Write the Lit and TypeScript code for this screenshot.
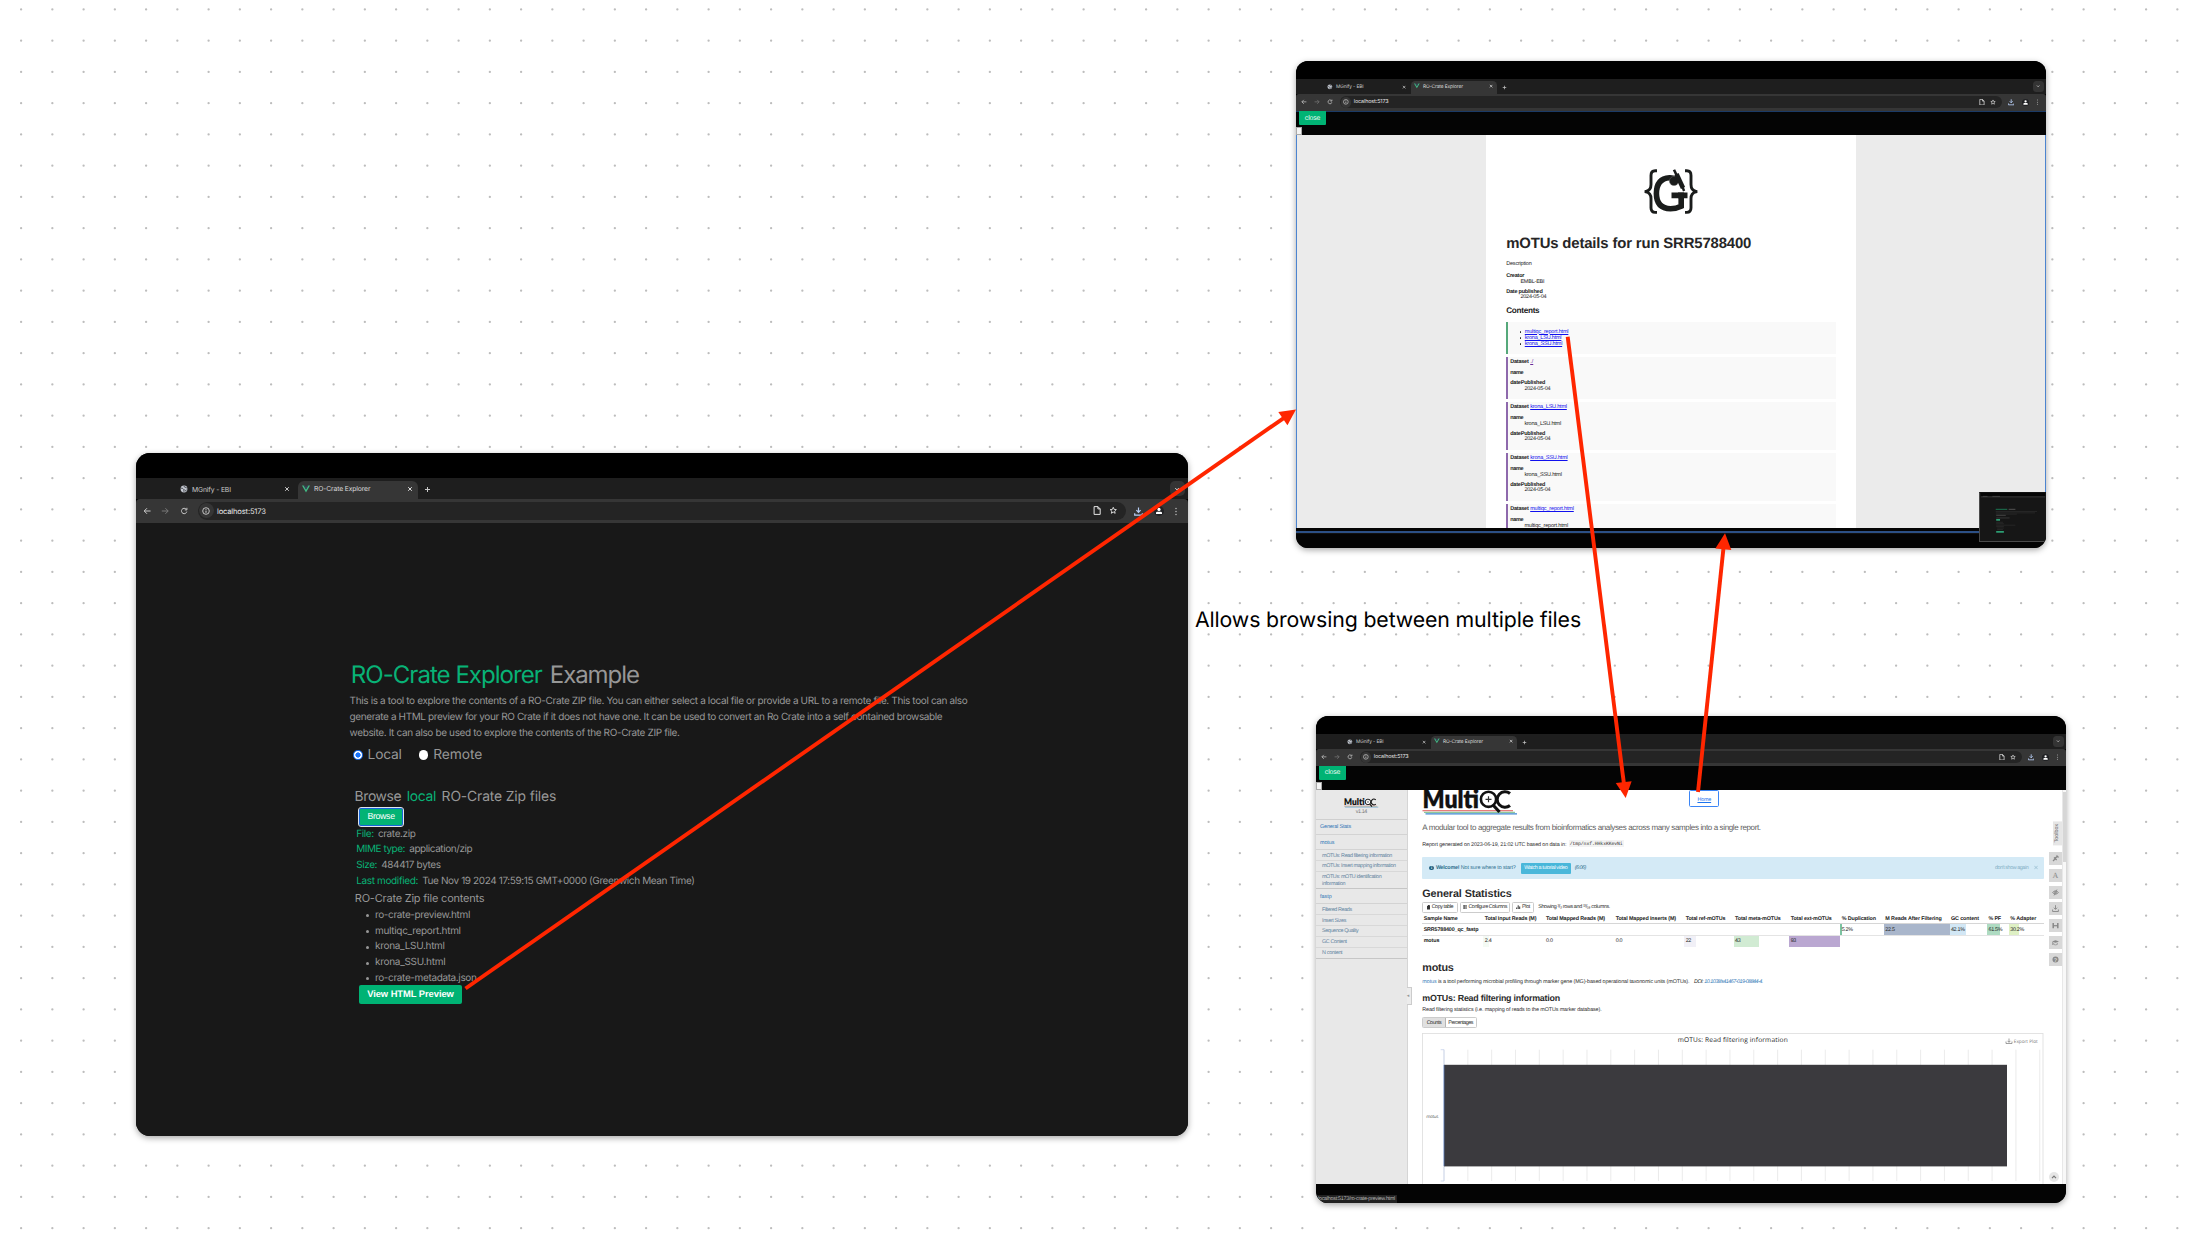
import { LitElement, html, svg, css, nothing } from "lit";
import { customElement, property } from "lit/decorators.js";

/** Text whose tracking is adjusted so that it fits a given width. */
@customElement("fit-text")
class FitText extends LitElement {
  static styles = css`
    :host { display: inline-block; white-space: pre; flex: none; }
  `;
  @property({ type: Number }) w = 0;
  render() { return html`<slot></slot>`; }
  updated() {
    const n = (this.textContent || "").length;
    if (!this.w || !n) return;
    this.style.letterSpacing = "0px";
    const natural = this.getBoundingClientRect().width;
    this.style.letterSpacing = ((this.w - natural) / n).toFixed(4) + "px";
  }
}

const fit = (text: string, w: number, cls = "") => html`<fit-text class=${cls} .w=${w}>${text}</fit-text>`;

/** A desktop window: menu bar strip, tab strip, address bar and a slotted page. */
@customElement("browser-window")
class BrowserWindow extends LitElement {
  static styles = css`
    :host { display: flex; flex-direction: column; overflow: hidden; background: #000; font-family: Inter, "Liberation Sans", sans-serif; }
    .chrome { flex: none; color: #c9c9c9; }
    .small { zoom: 0.713; }
    .menu { height: 25px; background: #000; }
    .tabs { height: 21px; background: #1e1e1e; display: flex; align-items: flex-end; padding: 0 3.5px 0 44px; }
    .tab { box-sizing: border-box; height: 18px; display: flex; align-items: center; font-size: 6.8px; padding-bottom: 2px; }
    .idle { width: 118px; padding-right: 8px; }
    .live { width: 120px; background: #363636; border-radius: 6px 6px 0 0; padding: 0 5px 3px 4px; color: #dcdcdc; }
    .name { flex: 1; white-space: nowrap; padding-left: 4px; }
    .idle .name { letter-spacing: -0.14px; }
    .live .name { letter-spacing: -0.14px; padding-top: 0.8px; }
    .plus { margin: 0 0 6px 6.4px; }
    .search { margin: 0 0 3px auto; width: 14.5px; height: 15px; border-radius: 5px; background: #343434; display: flex; align-items: center; justify-content: center; }
    .bar { height: 24px; background: #363636; border-radius: 4px 4px 0 0; display: flex; align-items: center; padding: 0 7px 0 6.6px; box-sizing: border-box; }
    .nav { flex: none; display: flex; gap: 9.9px; width: 55.2px; padding-left: 0.6px; box-sizing: border-box; }
    .addr { flex: none; width: 928px; height: 17.4px; border-radius: 9px; background: #242424; display: flex; align-items: center; font-size: 7.6px; color: #e4e4e4; box-sizing: border-box; padding: 0 8px 0 1px; margin-bottom: 0.4px; }
    .info { width: 15px; height: 15px; border-radius: 50%; background: #353535; display: flex; align-items: center; justify-content: center; margin-right: 3.2px; }
    .url { flex: 1; letter-spacing: -0.17px; padding-top: 0.6px; }
    .acts { display: flex; gap: 7.5px; }
    .right { flex: none; display: flex; align-items: center; justify-content: space-between; width: 44px; margin-left: 8.5px; }
    svg { display: block; flex: none; fill: none; stroke: currentColor; stroke-width: 1; }
    .off { color: #787878; }
    .dl { color: #b6cdf5; stroke-width: 1.2; }
    .page { flex: 1; min-height: 0; display: flex; flex-direction: column; }
    ::slotted(*) { flex: 1; min-height: 0; }
  `;
  @property({ type: Boolean }) small = false;
  render() {
    const x = svg`<path d="M1.2 1.2L4.8 4.8M4.8 1.2L1.2 4.8"/>`;
    return html`
      <div class="chrome ${this.small ? "small" : ""}">
        <div class="menu"></div>
        <div class="tabs">
          <div class="tab idle">
            <svg width="8" height="8" viewBox="0 0 8 8"><circle cx="4" cy="4" r="3.4" fill="#c3c7cf" stroke="none"/><path d="M1 3.2q1.5-.2 2 .6t1.2.7l-.6 2M4 .9q0 1.2 1 1.3t1.8.8M4.9 6.6q.4-1.5 1.7-1.6" stroke="#3a3d44" stroke-width=".9"/></svg>
            <span class="name">MGnify - EBI</span>
            <svg width="6" height="6">${x}</svg>
          </div>
          <div class="tab live">
            <svg width="8" height="8" viewBox="0 0 8 8"><path d="M0 .6h1.7L4 4.6 6.3.6H8L4 7.5z" fill="#41b883" stroke="none"/><path d="M1.7.6h1.4L4 2.2 4.9.6h1.4L4 4.6z" fill="#35495e" stroke="none"/></svg>
            <span class="name">RO-Crate Explorer</span>
            <svg width="6" height="6">${x}</svg>
          </div>
          <svg class="plus" width="7" height="7"><path d="M3.5 1v5M1 3.5h5"/></svg>
          <div class="search"><svg width="6" height="6"><path d="M1.2 2l1.8 2 1.8-2"/></svg></div>
        </div>
        <div class="bar">
          <div class="nav">
            <svg width="8.4" height="8" viewBox="0 0 8.4 8"><path d="M7.6 4H1.2M4 1.2L1.2 4 4 6.8"/></svg>
            <svg class="off" width="8.4" height="8" viewBox="0 0 8.4 8"><path d="M.8 4h6.4M4.4 1.2L7.2 4 4.4 6.8"/></svg>
            <svg width="8.4" height="8" viewBox="0 0 8.4 8"><path d="M6.8 4.6A2.7 2.7 0 1 1 6.2 2.2M6.9.8v2.1H4.8"/></svg>
          </div>
          <div class="addr">
            <div class="info"><svg width="8" height="8" viewBox="0 0 8 8"><circle cx="4" cy="4" r="3.3" stroke-width=".8"/><path d="M4 3.6v2.2M4 2.1v.8" stroke-width=".9"/></svg></div>
            <span class="url">localhost:5173</span>
            <div class="acts">
              <svg width="8.5" height="9" viewBox="0 0 8.5 9"><path d="M1.1.6h3.8l2.3 2.3v5.5H1.1zM4.9.6v2.3h2.3"/></svg>
              <svg width="8.5" height="9" viewBox="0 0 8.5 9"><path d="M4.25 1.3l.9 2.1 2.2.2-1.7 1.5.5 2.2-1.9-1.2-1.9 1.2.5-2.2-1.7-1.5 2.2-.2z" stroke-width=".9"/></svg>
            </div>
          </div>
          <div class="right">
            <svg class="dl" width="9" height="9" viewBox="0 0 9 9"><path d="M4.5.4v4.8M2.4 3.2l2.1 2.2 2.1-2.2M.7 6.2v2h7.6v-2"/></svg>
            <svg width="10" height="10" viewBox="0 0 10 10"><circle cx="5" cy="5" r="5" fill="#202124" stroke="none"/><circle cx="5" cy="3.4" r="1.6" fill="#fff" stroke="none"/><path d="M2 8V6.6q0-.9 1.2-.9h3.6q1.2 0 1.2.9V8z" fill="#fff" stroke="none"/></svg>
            <svg width="4" height="9" viewBox="0 0 4 9"><g fill="currentColor" stroke="none"><circle cx="2" cy="1.5" r=".7"/><circle cx="2" cy="4.5" r=".7"/><circle cx="2" cy="7.5" r=".7"/></g></svg>
          </div>
        </div>
      </div>
      <div class="page"><slot></slot></div>`;
  }
}

@customElement("explorer-page")
class ExplorerPage extends LitElement {
  static styles = css`
    :host { display: block; background: #181818; color: #979797; font: 10px/16px Inter, "Liberation Sans", sans-serif; padding: 136.2px 0 0 214px; white-space: nowrap; }
    fit-text { vertical-align: top; }
    .g { color: #08b276; }
    h1 { margin: 0 0 0 0.8px; font-weight: 400; font-size: 24px; line-height: 32px; height: 32px; display: flex; gap: 8px; }
    .intro { margin-top: 2.2px; margin-left: -0.4px; display: flex; flex-direction: column; }
    .radios { display: flex; align-items: center; margin: 5.6px 0 0 3px; height: 16px; font-size: 13.8px; font-weight: 400; }
    .dot { width: 9.6px; height: 9.6px; border-radius: 50%; background: #fff; margin-right: 5px; box-sizing: border-box; }
    .on { border: 1.2px solid #1673ff; background: radial-gradient(circle, #1673ff 2.3px, #fff 2.9px); }
    .second { margin-left: 17px; }
    h2 { margin: 24.4px 0 0 4.6px; height: 20px; font: 400 13.9px/20px Inter, "Liberation Sans", sans-serif; display: flex; gap: 5.5px; }
    .browse { margin: 0.6px 0 0 9.3px; width: 43.6px; height: 17.6px; box-sizing: border-box; border: 1px solid #1765d8; outline: 0.8px solid #dfe6ee; border-radius: 2px; background: #03b374; color: #fff; font: 500 8.8px/15.6px "Liberation Sans", sans-serif; text-align: center; }
    .facts { margin: 1px 0 0 6.3px; }
    .fact { height: 15.7px; line-height: 15.7px; display: flex; gap: 4.2px; }
    h3 { margin: 0.8px 0 0 4.8px; height: 16px; font: 400 11px/16px Inter, "Liberation Sans", sans-serif; }
    .files { margin: 1.8px 0 0 15.7px; }
    .file { height: 15.75px; line-height: 15.75px; display: flex; align-items: center; }
    .file::before { content: ""; width: 3px; height: 3px; border-radius: 50%; background: #979797; margin-right: 6.3px; }
    .view { margin: -1.4px 0 0 9.3px; width: 102.4px; height: 19px; border-radius: 2px; background: #00b374; color: #fff; font: bold 9.4px/18.8px "Liberation Sans", sans-serif; text-align: center; }
  `;
  render() {
    const facts: [string, number, string, number][] = [
      ["File:", 17.4, "crate.zip", 37.7], ["MIME type:", 48.7, "application/zip", 63],
      ["Size:", 20.7, "484417 bytes", 59.6], ["Last modified:", 61.7, "Tue Nov 19 2024 17:59:15 GMT+0000 (Greenwich Mean Time)", 272.4]];
    const files: [string, number][] = [["ro-crate-preview.html", 95], ["multiqc_report.html", 85.7], ["krona_LSU.html", 69.7], ["krona_SSU.html", 70.3], ["ro-crate-metadata.json", 101.5]];
    return html`
      <h1>${fit("RO-Crate Explorer", 191, "g")}${fit("Example", 89)}</h1>
      <div class="intro">
        <div>${fit("This is a tool to explore the contents of a RO-Crate ZIP file. You can either select a local file or provide a URL to a remote file. This tool can also", 617.8)}</div>
        <div>${fit("generate a HTML preview for your RO Crate if it does not have one. It can be used to convert an Ro Crate into a self contained browsable", 592.6)}</div>
        <div>${fit("website. It can also be used to explore the contents of the RO-Crate ZIP file.", 330)}</div>
      </div>
      <div class="radios"><span class="dot on"></span>${fit("Local", 34)}<span class="dot second"></span>${fit("Remote", 49)}</div>
      <h2>${fit("Browse", 46.6)}${fit("local", 29.4, "g")}${fit("RO-Crate Zip files", 114.6)}</h2>
      <div class="browse">${fit("Browse", 27.3)}</div>
      <div class="facts">${facts.map(([k, kw, v, vw]) => html`<div class="fact">${fit(k, kw, "g")}${fit(v, vw)}</div>`)}</div>
      <h3>${fit("RO-Crate Zip file contents", 129.6)}</h3>
      <div class="files">${files.map(([n, w]) => html`<div class="file">${fit(n, w)}</div>`)}</div>
      <div class="view">${fit("View HTML Preview", 86.7)}</div>`;
  }
}

const overlayBar = css`
  .top { flex: none; height: 24.5px; box-sizing: border-box; background: #040404; display: flex; flex-direction: column; align-items: flex-start; }
  .close { margin-left: 3px; width: 27px; height: 13.8px; background: #00b374; border-radius: 0 0 1px 1px; color: #e6faf2; font: 6.9px/13.4px "Liberation Sans", sans-serif; text-align: center; }
  .box { margin-top: 2.4px; width: 6px; height: 8px; background: #f4f4f4; border: 0.5px solid #aaa; box-sizing: border-box; }
`;

@customElement("crate-page")
class CratePage extends LitElement {
  static styles = [overlayBar, css`
    :host { display: flex; flex-direction: column; position: relative; background: #040404; font: 5.5px/5.8px "Liberation Sans", sans-serif; color: #222; white-space: nowrap; }
    fit-text { vertical-align: top; padding-top: 0.6px; }
    .top { border-top: 1px solid #1b3a66; }
    .top .close { margin-top: -0.6px; }
    .view { flex: none; height: 392.8px; overflow: hidden; background: #ebebeb; border: solid #4c84d0; border-width: 0 1px; box-sizing: border-box; display: flex; justify-content: center; }
    .sheet { width: 370px; background: #fff; padding: 33.6px 20.5px 0 20.2px; box-sizing: border-box; }
    .logo { display: block; margin: 0 auto; }
    h1 { font-size: 14.9px; line-height: 16px; height: 16px; margin: 21.8px 0 0; color: #262626; }
    .r { height: 5.8px; }
    .b { font-weight: bold; }
    .v { padding-left: 14.2px; }
    .desc { margin-top: 10px; }
    .creator { margin-top: 6.2px; }
    .pub { margin-top: 3.6px; }
    h2 { font-size: 8.2px; line-height: 10px; height: 10px; margin: 5.2px 0 6px; }
    .card { box-sizing: border-box; border-left: 2px solid #8e69ac; background: #f9f9f9; padding: 2.4px 0 0 2px; margin-bottom: 3.1px; height: 47.8px; }
    .toc { border-color: #55a87a; height: 32.4px; padding: 7.5px 0 0 11.4px; }
    .short { height: 42px; }
    .li { height: 6px; display: flex; align-items: center; }
    .li::before { content: ""; width: 1.6px; height: 1.6px; border-radius: 50%; background: #222; margin-right: 3.6px; }
    a { color: #1010ee; }
    a fit-text { text-decoration: underline; text-decoration-thickness: 0.6px; text-underline-offset: 0.6px; }
    .self { color: #6a2a9a; }
    .ttl { display: flex; gap: 1.6px; font-weight: bold; }
    .ttl a { font-weight: normal; }
    .nm { margin-top: 5.2px; }
    .dp { margin-top: 3.8px; }
    .line { margin-top: 2.6px; height: 2px; background: #2c5086; border-bottom: 0.5px solid #111; }
    .thumb { position: absolute; right: 0; bottom: 6px; width: 67px; height: 50px; border: 0.8px solid #4a4a4a; border-top-color: #111; border-right: 0; box-sizing: border-box; background: #161616; }
  `];
  card(link: string, lw: number, value: string) {
    return html`<div class="card ${value ? "" : "short"}">
      <div class="r ttl">${fit("Dataset", 18.4)}<a class=${lw ? "" : "self"}>${fit(link, lw)}</a></div>
      <div class="r b nm">${fit("name", 13)}</div>
      ${value ? html`<div class="r v">${fit(value, lw)}</div>` : nothing}
      <div class="r b dp">${fit("datePublished", 35)}</div>
      <div class="r v">${fit("2024-05-04", 26)}</div>
    </div>`;
  }
  render() {
    const links: [string, number][] = [["multiqc_report.html", 43.6], ["krona_LSU.html", 36.6], ["krona_SSU.html", 37.4]];
    return html`
      <div class="top"><div class="close">${fit("close", 15.3)}</div><div class="box"></div></div>
      <div class="view"><div class="sheet">
        <svg class="logo" width="56" height="45" viewBox="0 0 56 45" fill="none" stroke="#1a1c1b">
          <path d="M14 1.8h-1.8q-4.2 0-4.2 4.6v9.2q0 5.8-5 6.8v.4q5 1 5 6.8v9.2q0 4.6 4.2 4.6h1.8M42 1.8h1.8q4.2 0 4.2 4.6v9.2q0 5.8 5 6.8v.4q-5 1-5 6.8v9.2q0 4.6-4.2 4.6H42" stroke-width="2.9"/>
          <path d="M33.5 10.2Q29.5 8.5 26.5 8.7Q13.5 9.5 13.4 24.5Q13.5 39.5 27.5 39.7Q33 39.7 38.2 37.2V26.4H28.5" stroke-width="5.6"/>
          <path d="M35 26.4h9.5" stroke-width="5.6"/>
          <circle cx="31" cy="12" r="4.6" fill="#1a1c1b" stroke="#666" stroke-width=".5"/>
          <path d="M31 .8l2.4 5" stroke-width="2.6"/><path d="M33.5 5l6.5 14" stroke-width="4.6"/><path d="M39.5 18l1.6 4" stroke-width="2.4"/>
        </svg>
        <h1>${fit("mOTUs details for run SRR5788400", 245)}</h1>
        <div class="r desc">${fit("Description", 25.4)}</div>
        <div class="r b creator">${fit("Creator", 18)}</div>
        <div class="r v">${fit("EMBL-EBI", 24)}</div>
        <div class="r b pub">${fit("Date published", 36.4)}</div>
        <div class="r v">${fit("2024-05-04", 26)}</div>
        <h2>${fit("Contents", 33.2)}</h2>
        <div class="card toc">${links.map(([t, w]) => html`<div class="li"><a>${fit(t, w)}</a></div>`)}</div>
        ${this.card("./", 0, "")}
        ${this.card("krona_LSU.html", 36.6, "krona_LSU.html")}
        ${this.card("krona_SSU.html", 37.4, "krona_SSU.html")}
        ${this.card("multiqc_report.html", 43.6, "multiqc_report.html")}
      </div></div>
      <div class="line"></div>
      <svg class="thumb" viewBox="0 0 67 50"><path d="M0 1.5h67" stroke="#050505" stroke-width="3"/><path d="M0 4h67" stroke="#262626" stroke-width="2"/><path d="M2 3.5h5M12 3.5h8" stroke="#555" stroke-width=".6"/>
        <path d="M15.5 17h12" stroke="#1c7a56" stroke-width="1"/><path d="M29 17h7" stroke="#555" stroke-width="1"/><path d="M15.5 19.3h43M15.5 20.7h41M15.5 22h22" stroke="#333" stroke-width=".6"/><path d="M16 23.3h10" stroke="#555" stroke-width=".7"/><path d="M16 26h14" stroke="#444" stroke-width=".7"/><path d="M16 28h4" stroke="#30b080" stroke-width="1.6"/><path d="M16 30.5h7M16 32h8M16 33.5h20M16 35h8M17 36.5h7M17 38h6" stroke="#333" stroke-width=".6"/><path d="M16 40.5h8" stroke="#30b080" stroke-width="1.6"/></svg>`;
  }
}

@customElement("report-page")
class ReportPage extends LitElement {
  static styles = [overlayBar, css`
    :host { display: flex; flex-direction: column; position: relative; background: #040404; font: 5.4px/7px "Liberation Sans", sans-serif; color: #2c2c2c; white-space: nowrap; }
    fit-text { vertical-align: top; padding-top: 0.6px; }
    .view { flex: none; height: 393.2px; overflow: hidden; background: #fff; display: flex; }
    .side { position: relative; flex: none; width: 91.7px; background: #e8e8e8; border-right: 0.6px solid #d5d5d5; box-sizing: border-box; color: #5b87a8; }
    .brand { height: 29.4px; display: flex; flex-direction: column; align-items: center; padding-top: 6px; box-sizing: border-box; color: #777; border-bottom: 1px solid #cfcfcf; }
    .brand svg { display: block; }
    .cat { height: 15.2px; line-height: 15.8px; padding-left: 4px; box-sizing: border-box; border-bottom: 0.7px solid #d3d3d3; color: #2d74b5; }
    .sub { padding: 1.8px 0 1.8px 6px; border-bottom: 0.7px solid #d8d8d8; line-height: 6.3px; color: #5f83a0; }
    .sub div { height: 6.3px; }
    .end { border-bottom: 1px solid #c6c6c6; }
    .handle { position: absolute; right: -5px; top: 197px; width: 5px; height: 18px; box-sizing: border-box; background: #ececec; border: 0.6px solid #ccc; border-left: 0; color: #999; font-size: 5px; line-height: 17px; }
    .main { flex: 1; padding-left: 14.6px; min-width: 0; }
    .hero { height: 25.5px; display: flex; }
    .home { margin-left: 170px; width: 30px; height: 17px; box-sizing: border-box; border: 1px solid #3b85f5; border-top-width: 0.6px; border-radius: 1.6px; color: #1d74ee; text-align: center; line-height: 16.4px; }
    .home fit-text { text-decoration: underline; text-decoration-thickness: 0.6px; }
    .lead { margin-top: 6px; height: 12px; line-height: 12px; font-size: 8px; color: #5e5e5e; }
    .gen { margin-top: 6.3px; height: 8px; line-height: 8px; display: flex; gap: 2.4px; }
    code { font: 4.8px/7.8px "Liberation Mono", monospace; background: #f3f3f3; padding: 0 1px; height: 7px; }
    .alert { margin-top: 8.7px; width: 622px; height: 22.3px; box-sizing: border-box; background: #d4eaf6; border-radius: 1px; display: flex; align-items: center; color: #31708f; padding: 0 6px 0 7px; }
    .i { width: 4.6px; height: 4.6px; border-radius: 50%; background: #1e5f80; color: #fff; font: bold 4px/4.6px "Liberation Serif", serif; text-align: center; margin-right: 2px; }
    .tut { width: 50px; height: 11px; line-height: 11px; text-align: center; background: #49b7da; color: #f4fcff; border-radius: 1px; margin: 0 4px 0 5px; }
    .it { font-style: italic; }
    .again { margin-left: auto; color: #84b0c6; display: flex; gap: 6px; }
    .b { font-weight: bold; }
    h2 { margin: 7px 0 0; height: 14px; font: bold 10.8px/14px "Liberation Sans", sans-serif; }
    .btns { margin-top: 1.8px; height: 11px; display: flex; gap: 2.2px; align-items: center; }
    .btn { height: 11px; box-sizing: border-box; border: 0.7px solid #ccc; border-radius: 1.4px; line-height: 9.7px; display: flex; align-items: center; justify-content: center; gap: 1.4px; }
    .table { margin-top: 0.7px; width: 622px; color: #222; }
    .tr { display: grid; grid-template-columns: 61px 61.3px 69.7px 70px 49.3px 55.7px 51px 43.7px 65.6px 37.7px 21.7px 35.3px; height: 11.3px; line-height: 11px; border-bottom: 0.7px solid #e4e4e4; box-sizing: border-box; }
    .th { height: 10.6px; line-height: 10px; font-weight: bold; border-bottom: 1.3px solid #d6d6d6; }
    .td { position: relative; padding-left: 1.4px; }
    .last { border: 0; }
    .val { position: relative; }
    .fill { position: absolute; left: 0; top: 0; height: 11px; }
    .mt { margin-top: 13.6px; }
    .p { height: 7px; margin-top: 3.8px; display: flex; gap: 1.2px; }
    a { color: #337ab7; }
    h3 { margin: 6.2px 0 0; height: 12px; font: bold 8.9px/12px "Liberation Sans", sans-serif; }
    .p2 { margin-top: 2.8px; }
    .toggle { margin-top: 3.3px; height: 11.4px; width: 54.4px; display: flex; box-sizing: border-box; border: 0.7px solid #ccc; border-radius: 1.4px; line-height: 10px; }
    .on { width: 22.4px; background: #e0e0e0; border-right: 0.7px solid #b5b5b5; box-sizing: border-box; }
    .toggle div { text-align: center; }
    .off { flex: 1; }
    .chart { display: block; margin-top: 5.4px; font-family: "Open Sans", "Noto Sans", sans-serif; }
    .tools { position: relative; flex: none; width: 13px; display: flex; flex-direction: column; align-items: flex-end; }
    .tag { margin: 30.5px 0 6.7px; width: 9px; height: 24.4px; background: #e6e6e6; writing-mode: vertical-rl; transform: rotate(180deg); text-align: center; line-height: 9px; color: #707070; }
    .tag fit-text { padding-top: 0; }
    .tool { width: 13px; height: 13px; background: #d8d8d8; margin-bottom: 3.8px; flex: none; }
    .tool svg { display: block; fill: none; stroke: #888; }
    .up { position: absolute; right: 3px; bottom: 2px; }
    .scroll { flex: none; width: 4px; background: #f8f8f8; border-left: 0.5px solid #e8e8e8; box-sizing: border-box; padding-top: 2px; }
    .thumb { height: 69.5px; background: #d6d6d6; }
    .status { position: absolute; left: 0; bottom: 0; width: 81px; height: 7.6px; background: #222; color: #b5b5b5; line-height: 7.3px; padding-left: 2px; box-sizing: border-box; }
  `];
  logo(w: number, h: number, box: string) {
    return html`<svg width=${w} height=${h} viewBox=${box}>
      <text x="0" y="18.200" font-family="Lato" font-weight="800" font-size="25.500" textLength="56.500" lengthAdjust="spacingAndGlyphs" fill="#111" stroke="#111" stroke-width=".3">Multi</text>
      <path d="M87.5 3.5A7.8 7.8 0 1 0 87.5 15.5" fill="none" stroke="#111" stroke-width="3"/>
      <circle cx="66" cy="9.3" r="7.6" fill="#fff" stroke="#111" stroke-width="2.6"/><path d="M63 9.3h6M66 6.3v6" stroke="#333" stroke-width="1.2"/>
      <path d="M0 20.8h90.5" stroke="#e05050" stroke-width="1.1"/><path d="M1.5 22.3h91" stroke="#8fc79a" stroke-width="1.3"/><path d="M3 23.9h91.5" stroke="#3d87d0" stroke-width="1.2"/>
      <path d="M71 15.5l6 6.5" stroke="#111" stroke-width="3.2"/></svg>`;
  }
  render() {
    const subs = (rows: [string, number][][]) => rows.map((r, i) => html`<div class="sub ${i === rows.length - 1 ? "end" : ""}">${r.map(([t, w]) => html`<div>${fit(t, w)}</div>`)}</div>`);
    const heads: [string, number][] = [["Sample Name", 34], ["Total Input Reads (M)", 51.7], ["Total Mapped Reads (M)", 59], ["Total Mapped Inserts (M)", 60.3], ["Total ref-mOTUs", 39.7], ["Total meta-mOTUs", 45.7], ["Total ext-mOTUs", 41], ["% Duplication", 34.3], ["M Reads After Filtering", 56.3], ["GC content", 28], ["% PF", 12.3], ["% Adapter", 26]];
    type Cell = [string, number, number, string];
    const e: Cell = ["", 0, 0, ""];
    const r1: Cell[] = [["SRR5788400_qc_fastp", 54.7, 0, ""], e, e, e, e, e, e, ["5.2%", 11, 2, "#7cc3a2"], ["22.5", 9.3, 65.6, "#a9b6cb"], ["42.1%", 13.8, 16, "#d2e7f5"], ["61.5%", 13.6, 12.7, "#aedbc2"], ["30.2%", 13.6, 10.3, "#def0c4"]];
    const r2: Cell[] = [["motus", 15.6, 0, ""], ["2.4", 6.7, 5.3, "#f4faf4"], ["0.0", 6.7, 0, ""], ["0.0", 6.7, 0, ""], ["22", 5.4, 11.3, "#f1f0f7"], ["43", 5.4, 25.7, "#d1ebd3"], ["93", 5.4, 51, "#baa7d1"], e, e, e, e, e];
    const row = (cells: Cell[], cls: string) => html`<div class="tr ${cls}">${cells.map(([t, w, f, c], i) => html`<div class="td">${f ? html`<div class="fill" style="width:${f}px;background:${c}"></div>` : nothing}<span class="val ${i ? "" : "b"}">${fit(t, w)}</span></div>`)}</div>`;
    const glyphs = [
      svg`<path d="M4 9l2-2M5 5.5l2.7 2.5M6 6.5l2-2M7.5 3.5l2 2" stroke-width="1.3"/>`,
      svg`<text x="6.5" y="9.3" font-size="8" font-family="Liberation Serif" text-anchor="middle" fill="#888" stroke="none">A</text>`,
      svg`<path d="M3.5 6.5Q6.5 3 9.5 6.5Q6.5 10 3.5 6.5z" stroke-width=".8"/><circle cx="6.5" cy="6.5" r="1.2"/><path d="M8 3.5l-3 6" stroke-width=".8"/>`,
      svg`<path d="M6.5 3.2v4M4.8 5.7l1.7 1.7 1.7-1.7M3.6 7.5v2h5.8v-2" stroke-width=".9"/>`,
      svg`<path d="M4.2 4v5.2M8.8 4v5.2" stroke-width="1.5"/><path d="M4 6.7h5" stroke-width="1.2"/>`,
      svg`<path d="M3 5.5l3.5-1.3L10 5.5 6.5 6.8z" fill="#888" stroke="none"/><path d="M4.7 6.8v1.7q1.8.8 3.6 0V6.8M3.6 6v3" stroke-width=".7"/>`,
      svg`<circle cx="6.5" cy="6.5" r="3" fill="#888" stroke="none"/><text x="6.5" y="8.5" font-size="5.5" font-weight="bold" font-family="Liberation Sans" text-anchor="middle" fill="#ddd" stroke="none">?</text>`,
    ];
    const grid = Array.from({ length: 26 }, (_, i) => 22 + i * 23.83);
    return html`
      <div class="top"><div class="close">${fit("close", 15.3)}</div><div class="box"></div></div>
      <div class="view">
        <div class="side">
          <div class="brand">${this.logo(34.5, 12, "0 -7 95 33")}${fit("v1.14", 11.3)}</div>
          <div class="cat">${fit("General Stats", 31)}</div>
          <div class="cat">${fit("motus", 14.3)}</div>
          ${subs([[["mOTUs: Read filtering information", 70]], [["mOTUs: Insert mapping information", 73.7]], [["mOTUs: mOTU identification", 59.3], ["information", 23.3]]])}
          <div class="cat">${fit("fastp", 11.7)}</div>
          ${subs([[["Filtered Reads", 29.7]], [["Insert Sizes", 24]], [["Sequence Quality", 36.3]], [["GC Content", 24.7]], [["N content", 20.3]]])}
          <div class="handle">◂</div>
        </div>
        <div class="main">
          <div class="hero">${this.logo(97, 25.5, "-0.5 0 97 25.5")}<div class="home">${fit("Home", 13.7)}</div></div>
          <div class="lead">${fit("A modular tool to aggregate results from bioinformatics analyses across many samples into a single report.", 338.4)}</div>
          <div class="gen">${fit("Report generated on 2023-06-19, 21:02 UTC based on data in:", 144)}<code>${fit("/tmp/nxf.HHkxKKevNi", 53)}</code></div>
          <div class="alert"><span class="i">i</span>${fit("Welcome!", 23.4, "b")}&nbsp;${fit("Not sure where to start?", 55)}<span class="tut">${fit("Watch a tutorial video", 43)}</span>${fit("(6:06)", 11, "it")}<span class="again">${fit("don't show again", 33.4)}<svg width="4" height="7"><path d="M.3 1.8l3.4 3.4M3.7 1.8L.3 5.2" stroke="#84b0c6" stroke-width=".6"/></svg></span></div>
          <h2>${fit("General Statistics", 89.3)}</h2>
          <div class="btns">
            <div class="btn" style="width:35.3px"><svg width="3.5" height="4.5"><path d="M0 1h3.5v3.5H0zM.8 0h2v1.4h-2z" fill="#333"/></svg>${fit("Copy table", 21.5)}</div>
            <div class="btn" style="width:50.4px"><svg width="4" height="4"><path d="M0 .5h4M0 1.6h4M0 2.7h4M0 3.7h4M1.3 0v4" stroke="#444" stroke-width=".6"/></svg>${fit("Configure Columns", 38.5)}</div>
            <div class="btn" style="width:21.4px"><svg width="4.5" height="4.5"><path d="M.7 4V2.5M2.2 4V.3M3.7 4V1.5" stroke="#333" stroke-width="1"/></svg>${fit("Plot", 8)}</div>
            <span style="margin-left:2.3px">${fit("Showing ²/₂ rows and ¹²/₁₈ columns.", 71.7)}</span>
          </div>
          <div class="table">
            <div class="tr th">${heads.map(([t, w]) => html`<div class="td">${fit(t, w)}</div>`)}</div>
            ${row(r1, "")}${row(r2, "last")}
          </div>
          <h2 class="mt">${fit("motus", 31.4)}</h2>
          <div class="p"><a>${fit("motus", 14.4)}</a>${fit("is a tool performing microbial profiling through marker gene (MG)-based operational taxonomic units (mOTUs).", 251.5)}<span style="width:2.3px"></span>${fit("DOI:", 9, "it")}<a>${fit("10.1038/s41467-019-08844-4.", 58.6, "it")}</a></div>
          <h3>${fit("mOTUs: Read filtering information", 137.6)}</h3>
          <div class="p p2">${fit("Read filtering statistics (i.e. mapping of reads to the mOTUs marker database).", 179.3)}</div>
          <div class="toggle"><div class="on">${fit("Counts", 14.7)}</div><div class="off">${fit("Percentages", 24.7)}</div></div>
          <svg class="chart" width="622" height="152" viewBox="0 0 622 152">
            <rect x=".4" y=".4" width="620.6" height="160" fill="none" stroke="#ddd" stroke-width=".8"/>
            ${grid.map(x => svg`<path d="M${x} 16.7V148" stroke="#e3e3e3" stroke-width=".7"/>`)}
            <path d="M18.7 16.7H22V148H18.7" fill="none" stroke="#c5d2ec" stroke-width=".8"/>
            <rect x="22" y="31.8" width="563" height="101.6" fill="#3b3a3e"/>
            <path d="M22 32v101" stroke="#5a7fc0" stroke-width=".7"/>
            <text x="255.7" y="8.9" font-size="6.6" textLength="110" fill="#222">mOTUs: Read filtering information</text>
            <text x="591.8" y="9.9" font-size="4.7" textLength="23.8" fill="#777">Export Plot</text>
            <path d="M587 5.5v3.7M585.5 7.8l1.5 1.5 1.5-1.5M584 8.5v2h6v-2" fill="none" stroke="#777" stroke-width=".7"/>
            <text x="4.3" y="85" font-size="4.4" textLength="12" fill="#555">motus</text>
          </svg>
        </div>
        <div class="tools">
          <div class="tag">${fit("Toolbox", 0)}</div>
          ${glyphs.map(g => html`<div class="tool"><svg width="13" height="13">${g}</svg></div>`)}
          <svg class="up" width="10" height="10"><circle cx="5" cy="5" r="5" fill="#e6e6e6"/><path d="M3 6.2l2-2 2 2" fill="none" stroke="#777" stroke-width="1.2"/></svg>
        </div>
        <div class="scroll"><div class="thumb"></div></div>
      </div>
      <div class="status">${fit("localhost:5173/ro-crate-preview.html", 77)}</div>`;
  }
}

@customElement("app-root")
class AppRoot extends LitElement {
  static styles = css`
    :host { display: block; position: relative; width: 2192px; height: 1259px; overflow: hidden; background: #fff; text-rendering: geometricPrecision; }
    .layer { position: absolute; left: 0; top: 0; }
    .win { position: absolute; box-shadow: 0 2px 6px rgba(0, 0, 0, 0.35); }
    .one { left: 136px; top: 453px; width: 1052px; height: 683px; border-radius: 14px; }
    .two { left: 1296px; top: 61px; width: 750px; height: 487px; border-radius: 12px; }
    .three { left: 1316px; top: 716px; width: 750px; height: 487px; border-radius: 12px; }
    .note { position: absolute; left: 1195px; top: 606px; font: 21.3px/28px Inter, "Liberation Sans", sans-serif; color: #000; }
  `;
  arrow(x1: number, y1: number, x2: number, y2: number) {
    const len = Math.hypot(x2 - x1, y2 - y1);
    const ux = (x2 - x1) / len, uy = (y2 - y1) / len;
    const bx = x2 - ux * 16, by = y2 - uy * 16;
    return svg`<path d="M${x1} ${y1}L${bx + ux} ${by + uy}" stroke="#ff2600" stroke-width="3.9"/>
      <path d="M${x2} ${y2}L${bx - uy * 8} ${by + ux * 8}L${bx + uy * 8} ${by - ux * 8}z" fill="#ff2600"/>`;
  }
  render() {
    let dots = "";
    for (let y = 9.4; y < 1259; y += 31.25) for (let x = 21.1; x < 2192; x += 31.25) dots += `M${x} ${y}h.01`;
    return html`
      <svg class="layer" width="2192" height="1259"><path d=${dots} stroke="#bdbdbd" stroke-width="2.3" stroke-linecap="round"/></svg>
      <browser-window class="win one"><explorer-page></explorer-page></browser-window>
      <browser-window class="win two" small><crate-page></crate-page></browser-window>
      <browser-window class="win three" small><report-page></report-page></browser-window>
      <div class="note">${fit("Allows browsing between multiple files", 386)}</div>
      <svg class="layer" width="2192" height="1259">
        ${this.arrow(465.5, 988.5, 1296, 409.5)}
        ${this.arrow(1567.7, 336.7, 1625.7, 798)}
        ${this.arrow(1698, 792, 1725, 533.3)}
      </svg>`;
  }
}
